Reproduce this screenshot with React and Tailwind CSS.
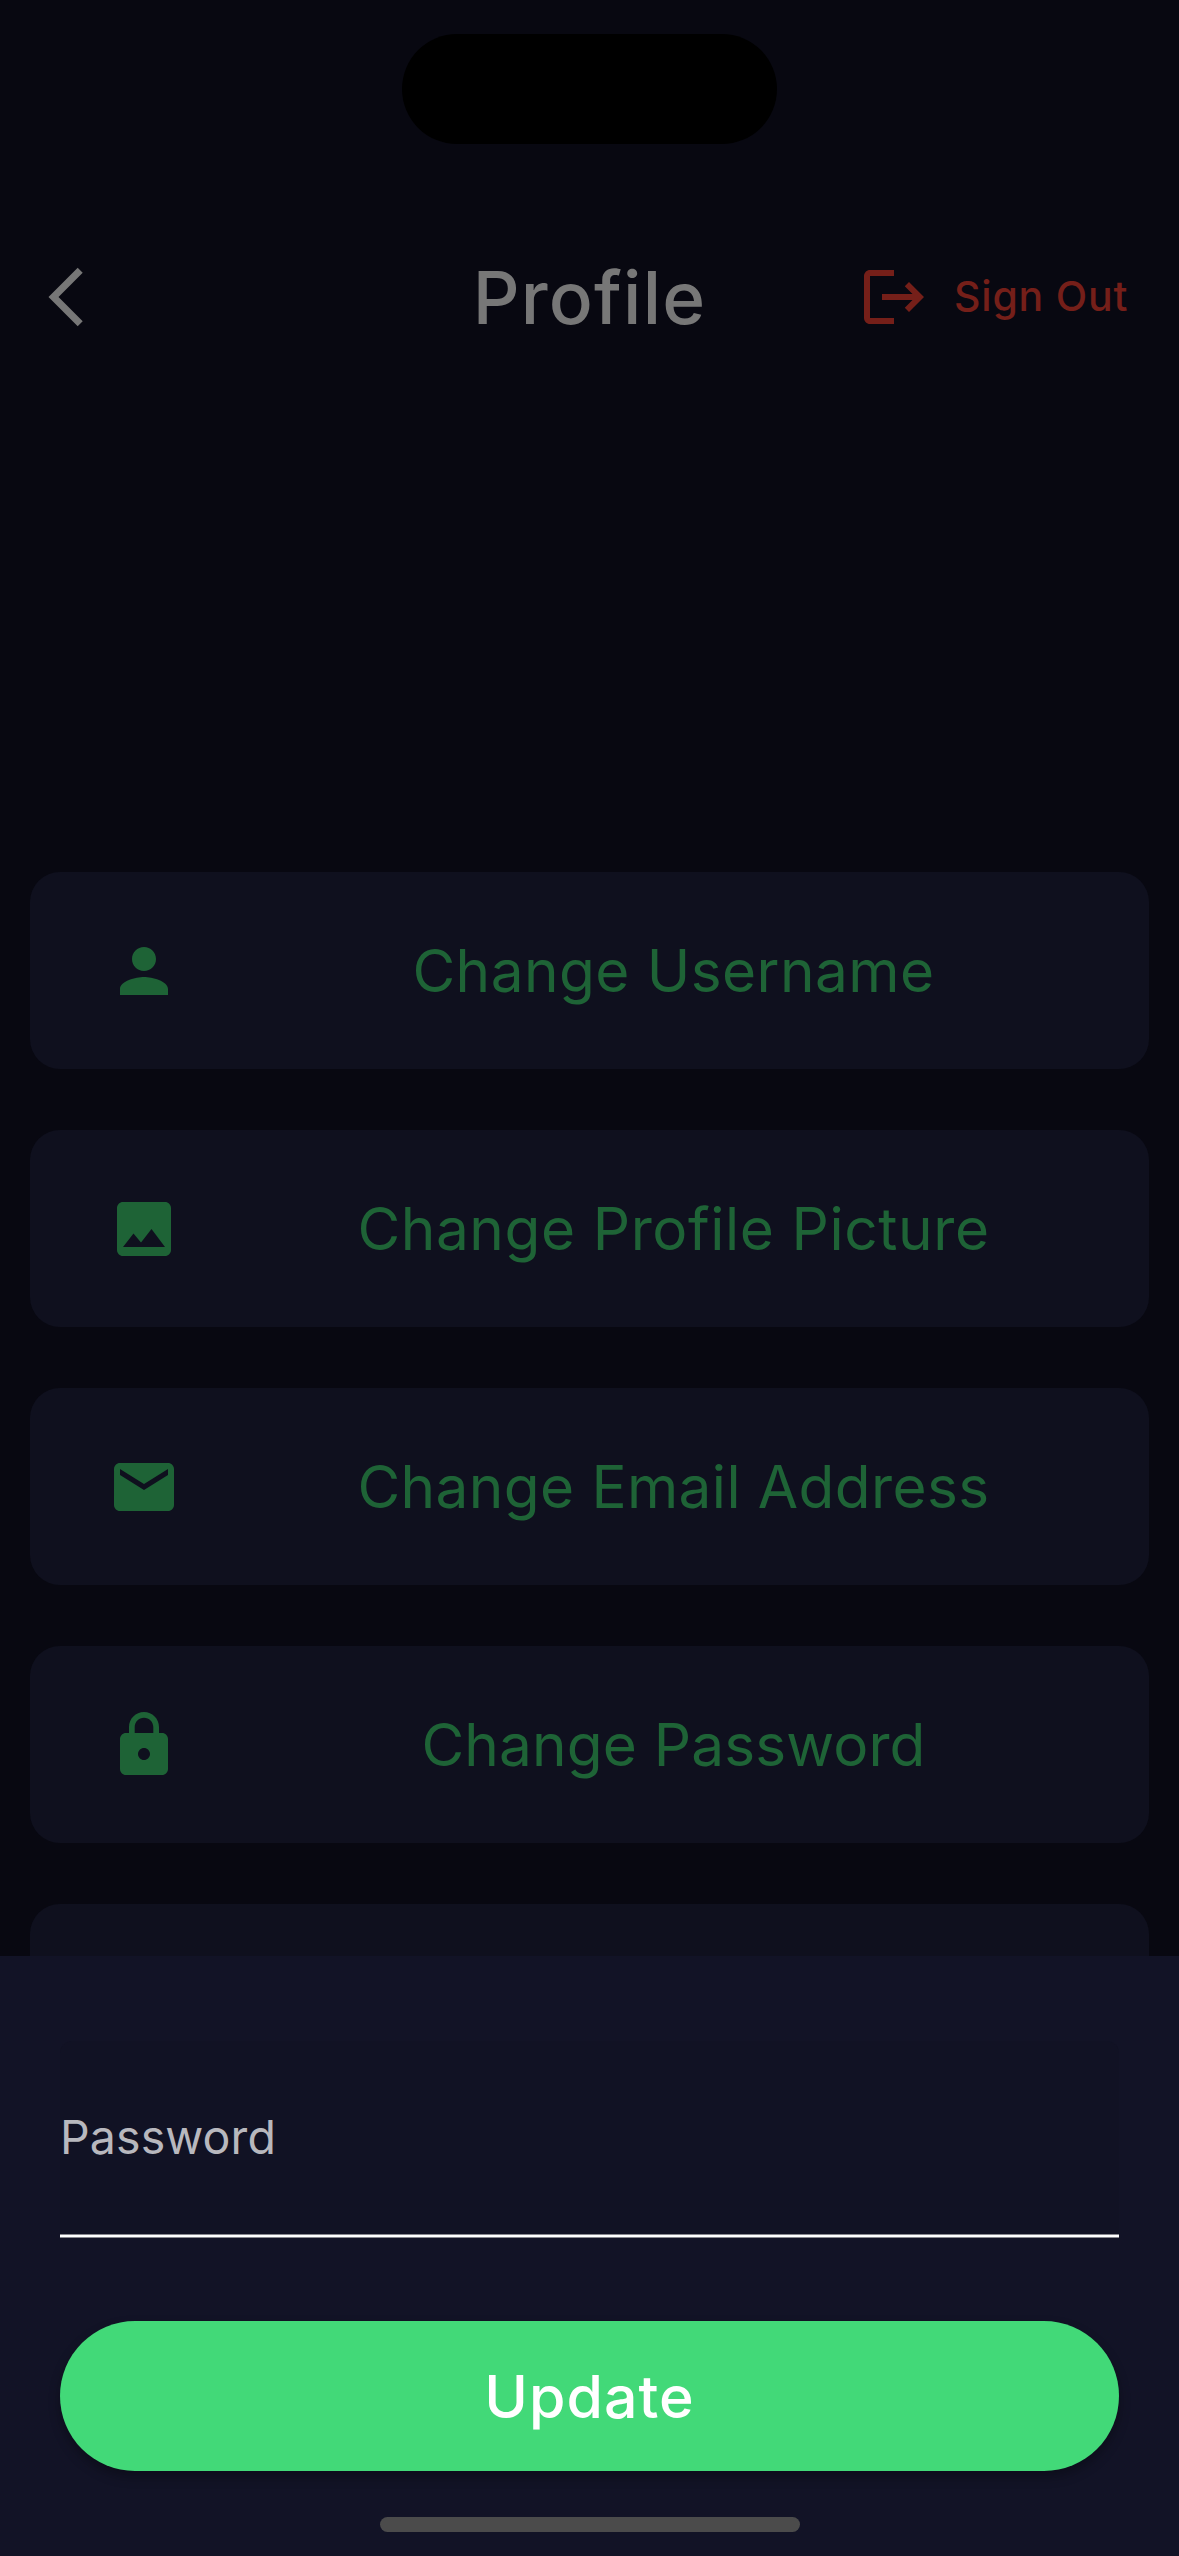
import { MdPerson, MdImage, MdEmail, MdLock, MdLogout } from "react-icons/md";

const rows = [
  { label: "Change Username", Icon: MdPerson, tracking: "tracking-[0.45px]" },
  { label: "Change Profile Picture", Icon: MdImage, tracking: "tracking-[0.6px]" },
  { label: "Change Email Address", Icon: MdEmail, tracking: "tracking-[0.4px]" },
  { label: "Change Password", Icon: MdLock, tracking: "tracking-[0.15px]" },
];

export default function App() {
  return (
    <div className="flex h-[2556px] w-[1179px] flex-col overflow-hidden bg-[#080811] font-['Inter',sans-serif]">
      <div className="flex h-[230px] shrink-0 justify-center pt-[34px]">
        <div className="h-[110px] w-[375px] rounded-full bg-black" />
      </div>

      <header className="grid h-[134px] shrink-0 grid-cols-3 items-center">
        <svg className="ml-[48px] h-[60px] w-[35px]" viewBox="0 0 35 60" fill="#777777">
          <path d="M.5 30 29.7.7l5 5L10.5 30l24.2 24.3-5 5z" />
        </svg>
        <h1 className="pt-px text-center text-[73px] leading-none font-medium tracking-[1.2px] text-[#777777]">Profile</h1>
        <button className="flex items-center gap-[24px] pl-[72px] text-[#751f19]">
          <MdLogout className="size-[72px] shrink-0" />
          <span className="pb-[2px] text-[41px] leading-none font-medium tracking-[0.8px] whitespace-nowrap">Sign Out</span>
        </button>
      </header>

      <main className="flex h-[1592px] shrink-0 flex-col gap-[61px] overflow-hidden px-[30px] pt-[508px]">
        {rows.map(({ label, Icon, tracking }) => (
          <button key={label} className="flex h-[197px] shrink-0 items-center rounded-[30px] bg-[#0f101e] pt-px text-[#1e6336]">
            <Icon className="ml-[78px] size-[72px]" />
            <span className={`ml-[18px] flex-1 text-center text-[58.5px] leading-none ${tracking}`}>{label}</span>
          </button>
        ))}
        <div className="h-[197px] shrink-0 rounded-[30px] bg-[#0f101e]" />
      </main>

      <section className="flex h-[600px] shrink-0 flex-col bg-[#121326] px-[60px] pt-[85px]">
        <div className="flex h-[197px] flex-col rounded-t-[12px] bg-[#111224]">
          <span className="flex flex-1 items-center pb-px text-[46.5px] leading-none tracking-[0.1px] text-[#b8b8be]">Password</span>
          <div className="h-[4px] border-y border-[#88888f] bg-white" />
        </div>
        <button className="mt-[83px] h-[150px] shrink-0 rounded-full bg-[#42d978] text-center text-[59px] leading-none font-medium tracking-[1px] text-white shadow-[0_6px_12px_rgba(0,0,0,0.3)]">
          Update
        </button>
        <div className="mt-[46px] h-[15px] w-[420px] shrink-0 self-center rounded-full bg-[#4b4b4b]" />
      </section>
    </div>
  );
}
